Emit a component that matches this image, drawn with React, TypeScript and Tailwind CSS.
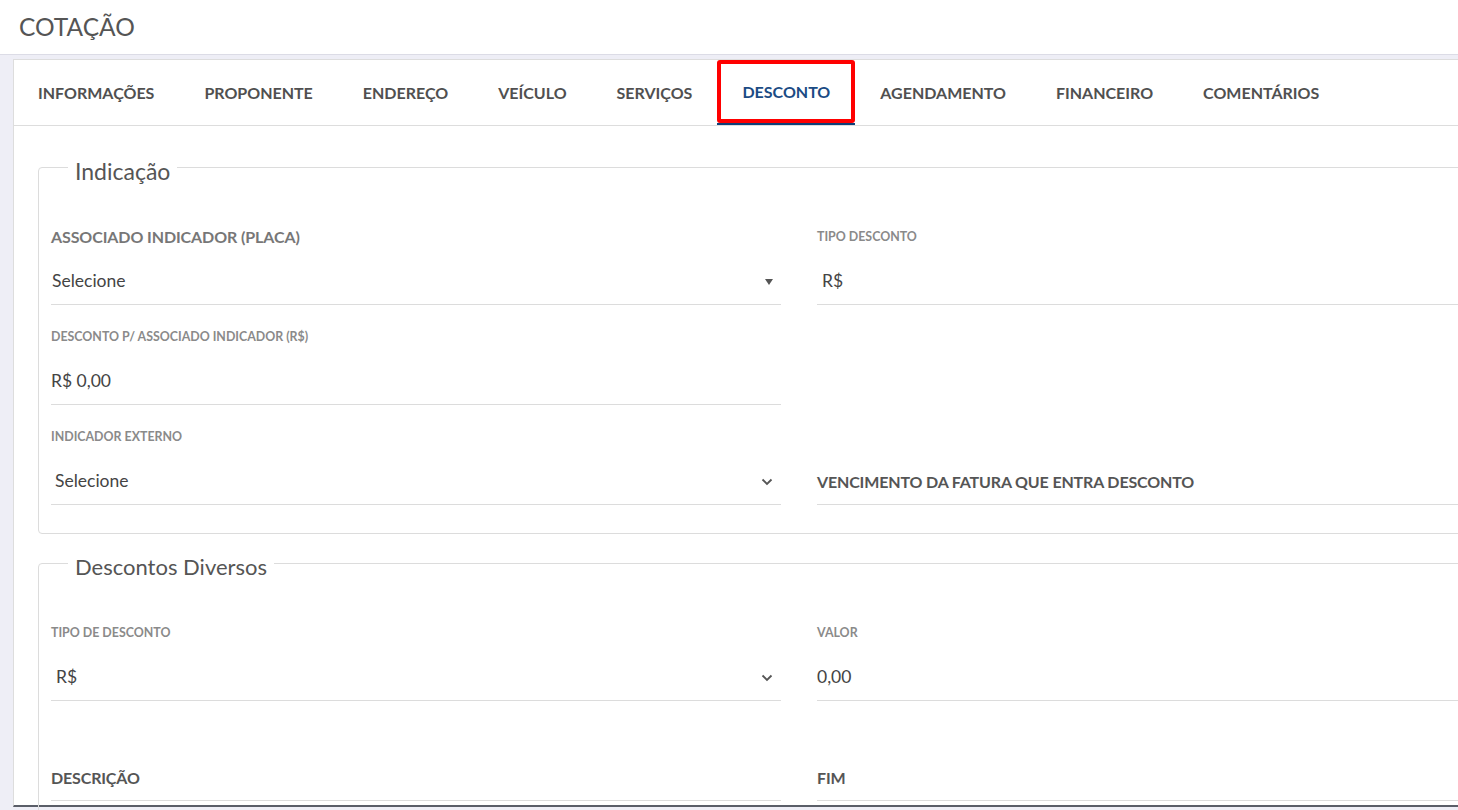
import React from "react";

const tabs = [
  "INFORMAÇÕES",
  "PROPONENTE",
  "ENDEREÇO",
  "VEÍCULO",
  "SERVIÇOS",
  "DESCONTO",
  "AGENDAMENTO",
  "FINANCEIRO",
  "COMENTÁRIOS",
];

function Chevron() {
  return (
    <svg width="12" height="8" viewBox="0 0 12 8" className="shrink-0">
      <path d="M1.5 1.5 L6 6 L10.5 1.5" fill="none" stroke="#555" strokeWidth="1.8" />
    </svg>
  );
}

function Triangle() {
  return (
    <svg width="8" height="6" viewBox="0 0 8 6" className="shrink-0">
      <path d="M0 0 L8 0 L4 6 Z" fill="#555" />
    </svg>
  );
}

type FieldProps = {
  label?: string;
  labelSize?: "big" | "small";
  value?: string;
  valueBold?: boolean;
  indent?: string;
  icon?: "chevron" | "triangle";
};

function Field({ label, labelSize = "small", value, valueBold, indent = "pl-0", icon }: FieldProps) {
  return (
    <div className="mt-[22px]">
      <div
        className={
          "h-[20px] leading-[20px] mb-[12px] font-bold whitespace-nowrap " +
          (labelSize === "big" ? "text-[16px] text-[#777] tracking-[-0.1px]" : "text-[12.4px] text-[#8a8a8a]")
        }
      >
        {label}
      </div>
      <div className={"h-[46px] border-b border-[#dcdcdc] flex items-center justify-between pr-[8px] " + indent}>
        <span
          className={
            valueBold ? "text-[16px] font-bold text-[#555] tracking-[-0.15px]" : "text-[17.5px] text-[#444]"
          }
        >
          {value}
        </span>
        {icon === "chevron" && <Chevron />}
        {icon === "triangle" && <Triangle />}
      </div>
    </div>
  );
}

function Section({ title, children, className = "", titleSize = "text-[22px]" }: { title: string; children: React.ReactNode; className?: string; titleSize?: string }) {
  return (
    <fieldset className={"w-[1522px] border border-[#dcdcdc] rounded-[4px] px-[12px] pb-[28px] " + className}>
      <legend className={"ml-[17px] px-[7px] pt-[8px] leading-[30px] text-[#555] " + titleSize}>{title}</legend>
      <div className="grid grid-cols-[730px_730px] gap-x-[36px] pt-[19px]">{children}</div>
    </fieldset>
  );
}

export default function App() {
  return (
    <div className="w-[1458px] h-[810px] overflow-hidden bg-[#eeeef6] font-['Lato',sans-serif]">
      <header className="h-[55px] bg-white border-b border-[#dcdce6] pl-[19px] flex items-center">
        <h1 className="text-[24.5px] text-[#555] pt-[1px]">COTAÇÃO</h1>
      </header>
      <div className="pl-[13px] pt-[4px]">
        <div className="w-[1600px] h-[748px] bg-white border-l border-t border-[#dddddd] border-b-2 border-b-[#5a5e68]">
          <nav className="flex border-b border-[#dddddd] h-[66px] -ml-[1px]">
            {tabs.map((t) => {
              const active = t === "DESCONTO";
              return (
                <div
                  key={t}
                  className={
                    "relative h-[65px] px-[25px] flex items-center text-[16px] font-bold whitespace-nowrap " +
                    (active ? "text-[#1b4b84] border-b-2 border-[#0f3f78]" : "text-[#505050]")
                  }
                >
                  {t}
                  {active && (
                    <div className="absolute left-0 right-0 top-0 bottom-0 border-[4px] border-[#ff0000] rounded-[3px]" />
                  )}
                </div>
              );
            })}
          </nav>
          <div className="pl-[24px] pt-[22px]">
            <Section title="Indicação" titleSize="text-[23px]">
              <Field label="ASSOCIADO INDICADOR (PLACA)" labelSize="big" value="Selecione" indent="pl-[1px]" icon="triangle" />
              <Field label="TIPO DESCONTO" value="R$" indent="pl-[5px]" />
              <Field label="DESCONTO P/ ASSOCIADO INDICADOR (R$)" value="R$ 0,00" />
              <div />
              <Field label="INDICADOR EXTERNO" value="Selecione" indent="pl-[4px]" icon="chevron" />
              <Field label="" value="VENCIMENTO DA FATURA QUE ENTRA DESCONTO" valueBold />
            </Section>
            <Section title="Descontos Diversos" className="mt-[10px]">
              <Field label="TIPO DE DESCONTO" value="R$" indent="pl-[5px]" icon="chevron" />
              <Field label="VALOR" value="0,00" />
              <Field label="" value="DESCRIÇÃO" valueBold />
              <Field label="" value="FIM" valueBold />
            </Section>
          </div>
        </div>
      </div>
    </div>
  );
}
